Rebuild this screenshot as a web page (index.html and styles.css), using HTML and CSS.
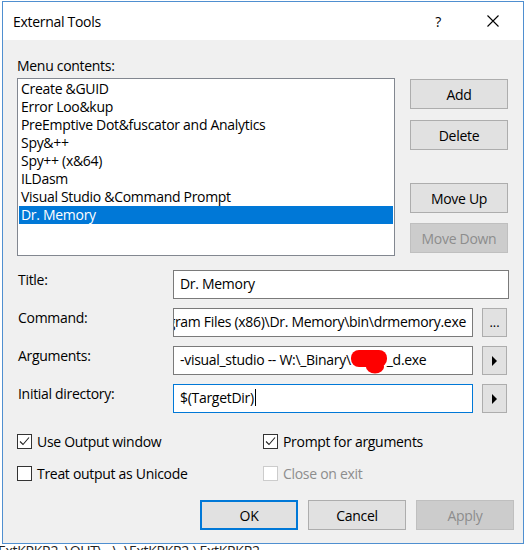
FILE: index.html
```html
<!DOCTYPE html>
<html>
<head>
<meta charset="utf-8">
<title>External Tools</title>
<link rel="stylesheet" href="styles.css">
</head>
<body>
<div class="window">
  <div class="titlebar">
    <span class="title">External Tools</span>
    <span class="help">?</span>
    <span class="close"><svg width="12" height="12" viewBox="0 0 12 12"><path d="M0.5 0.5L11.5 11.5M11.5 0.5L0.5 11.5" stroke="#000" stroke-width="1.1" fill="none"/></svg></span>
  </div>
  <div class="content">
    <div class="menu-label">Menu contents:</div>
    <div class="top">
      <div class="list">
        <div class="item">Create &amp;GUID</div>
        <div class="item">Error Loo&amp;kup</div>
        <div class="item">PreEmptive Dot&amp;fuscator and Analytics</div>
        <div class="item">Spy&amp;++</div>
        <div class="item">Spy++ (x&amp;64)</div>
        <div class="item">ILDasm</div>
        <div class="item">Visual Studio &amp;Command Prompt</div>
        <div class="item selected">Dr. Memory</div>
      </div>
      <div class="side">
        <button class="btn add">Add</button>
        <button class="btn delete">Delete</button>
        <button class="btn moveup">Move Up</button>
        <button class="btn movedown disabled">Move Down</button>
      </div>
    </div>
    <div class="fields">
      <div class="row">
        <span class="flabel">Title:</span>
        <div class="input full">Dr. Memory</div>
      </div>
      <div class="row">
        <span class="flabel">Command:</span>
        <div class="input short endclip"><span class="txt">C:\Program Files (x86)\Dr. Memory\bin\drmemory.exe</span></div>
        <button class="mini dots">...</button>
      </div>
      <div class="row">
        <span class="flabel">Arguments:</span>
        <div class="input short">-visual_studio -- W:\_Binary\<svg class="blob" width="37" height="25" viewBox="0 0 37 25"><rect x="1" y="1" width="36" height="17" rx="8" fill="#fe0000"/><ellipse cx="25" cy="18" rx="9" ry="6.5" fill="#fe0000"/></svg>_d.exe</div>
        <button class="mini"><span class="tri"></span></button>
      </div>
      <div class="row">
        <span class="flabel">Initial directory:</span>
        <div class="input short focus">$(TargetDir)<span class="caret"></span></div>
        <button class="mini"><span class="tri"></span></button>
      </div>
    </div>
    <div class="checks">
      <label class="chk"><span class="box"><svg width="13" height="13" viewBox="0 0 13 13"><path d="M2 6.5L5 9.5L11 2.5" stroke="#222" stroke-width="1.1" fill="none"/></svg></span>Use Output window</label>
      <label class="chk"><span class="box"><svg width="13" height="13" viewBox="0 0 13 13"><path d="M2 6.5L5 9.5L11 2.5" stroke="#222" stroke-width="1.1" fill="none"/></svg></span>Prompt for arguments</label>
      <label class="chk"><span class="box"></span>Treat output as Unicode</label>
      <label class="chk dis"><span class="box"></span>Close on exit</label>
    </div>
    <div class="actions">
      <button class="btn ok">OK</button>
      <button class="btn">Cancel</button>
      <button class="btn disabled">Apply</button>
    </div>
  </div>
</div>
<div class="behind">ExtKRKR2 .\OUT\ ..\..\ExtKRKR2 ) ExtKRKR2</div>
</body>
</html>
```

FILE: styles.css
```css
html, body {
  margin: 0;
  padding: 0;
}
body {
  background: #ffffff;
  font-family: "Open Sans", "Noto Sans", "DejaVu Sans", sans-serif;
  font-size: 14px;
  letter-spacing: -0.3px;
  color: #000;
  width: 530px;
  height: 550px;
  overflow: hidden;
}
.window {
  margin: 1px 0 0 2px;
  width: 520px;
  height: 541px;
  border: 1px solid #4f8fd0;
  background: #f0f0f0;
  display: flex;
  flex-direction: column;
}
.titlebar {
  height: 38px;
  flex: none;
  background: #ffffff;
  display: flex;
  align-items: center;
  padding-left: 10px;
}
.title {
  font-size: 14px;
}
.help {
  margin-left: auto;
  font-size: 14px;
}
.close {
  display: flex;
  margin-left: 46px;
  margin-right: 24px;
}
.content {
  padding: 16px 0 0 14px;
}
.menu-label {
  height: 20px;
  line-height: 20px;
  margin-bottom: 2px;
}
.top {
  display: flex;
  align-items: flex-start;
  gap: 15px;
}
.list {
  box-sizing: border-box;
  width: 378px;
  height: 178px;
  border: 1px solid #828790;
  background: #fff;
  padding: 1px;
}
.item {
  height: 18px;
  line-height: 18px;
  padding-left: 2px;
  white-space: nowrap;
}
.item.selected {
  background: #0078d7;
  color: #fff;
}
.side {
  display: flex;
  flex-direction: column;
  width: 98px;
}
.btn {
  box-sizing: border-box;
  width: 98px;
  height: 30px;
  background: #e1e1e1;
  border: 1px solid #adadad;
  font: inherit;
  letter-spacing: inherit;
  color: #000;
  padding: 0;
  margin: 0;
}
.btn.disabled {
  background: #cccccc;
  border-color: #bfbfbf;
  color: #8d8d8d;
}
.add { margin-top: 1px; }
.delete { margin-top: 11px; }
.moveup { margin-top: 33px; }
.movedown { margin-top: 10px; }
.fields {
  display: flex;
  flex-direction: column;
  gap: 9px;
  margin-top: 14px;
}
.row {
  display: flex;
  align-items: flex-start;
  height: 29px;
}
.flabel {
  width: 155px;
  margin-left: 1px;
  line-height: 20px;
}
.input {
  box-sizing: border-box;
  height: 29px;
  border: 1px solid #7a7a7a;
  background: #fff;
  padding: 0 6px 2px 6px;
  line-height: 25px;
  white-space: nowrap;
  overflow: hidden;
  display: flex;
  align-items: center;
}
.input.full { width: 336px; }
.input.short { width: 300px; }
.input.focus { border-color: #0078d7; }
.endclip {
  justify-content: flex-end;
}
.endclip .txt {
  flex: none;
}
.blob {
  flex: none;
  margin: 3px 0 0 -1px;
}
.caret {
  display: inline-block;
  width: 1px;
  height: 17px;
  background: #000;
  margin-left: 1px;
}
.mini {
  box-sizing: border-box;
  width: 25px;
  height: 29px;
  margin-left: 9px;
  background: #e1e1e1;
  border: 1px solid #adadad;
  padding: 0;
  font: inherit;
  display: flex;
  align-items: center;
  justify-content: center;
}
.dots {
  font-size: 13px;
  padding-bottom: 2px;
}
.tri {
  width: 0;
  height: 0;
  border-left: 5px solid #000;
  border-top: 5px solid transparent;
  border-bottom: 5px solid transparent;
}
.checks {
  margin-top: 20px;
  display: grid;
  grid-template-columns: 246px 246px;
  row-gap: 16px;
}
.chk {
  display: flex;
  align-items: center;
  height: 16px;
  white-space: nowrap;
}
.box {
  box-sizing: border-box;
  width: 15px;
  height: 15px;
  border: 1px solid #333;
  background: #fff;
  margin-right: 5px;
  display: flex;
  align-items: center;
  justify-content: center;
}
.chk.dis {
  color: #8d8d8d;
}
.chk.dis .box {
  border-color: #cccccc;
}
.actions {
  display: flex;
  gap: 10px;
  margin-top: 19px;
  padding-left: 183px;
}
.btn.ok {
  border: 2px solid #0078d7;
}
.behind {
  line-height: 12px;
  height: 12px;
  white-space: nowrap;
  color: #222;
  margin-left: -2px;
  padding-top: 1px;
}
```
